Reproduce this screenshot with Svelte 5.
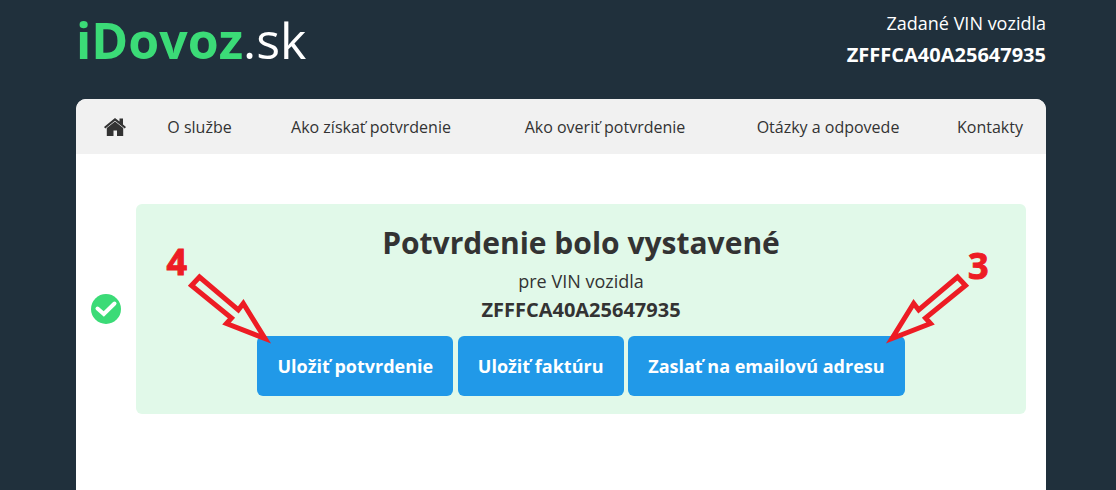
<script>
	const vin = 'ZFFFCA40A25647935';

	const links = [
		{ label: 'O službe', href: '#o-sluzbe' },
		{ label: 'Ako získať potvrdenie', href: '#ako-ziskat' },
		{ label: 'Ako overiť potvrdenie', href: '#ako-overit' },
		{ label: 'Otázky a odpovede', href: '#otazky' },
		{ label: 'Kontakty', href: '#kontakty' }
	];
</script>

<div class="page">
	<header>
		<a class="logo" href="#domov"><strong>iDovoz</strong>.sk</a>
		<div class="entered">
			<span>Zadané VIN vozidla</span>
			<strong class="vin">{vin}</strong>
		</div>
	</header>

	<div class="panel">
		<nav>
			<a class="home" href="#domov" aria-label="Domov">
				<svg viewBox="0 0 22 18">
					<path d="M11 0 15.500 3.600V.5h3.500v6L22 9 20.700 10.500 11 2.700 1.300 10.500 0 9Z" />
					<path d="M11 3.500 19.200 10.100V18H13v-5.500H9.500V18H2.800v-7.900Z" />
				</svg>
			</a>
			{#each links as link}
				<a href={link.href}>{link.label}</a>
			{/each}
		</nav>

		<main>
			<svg class="check" viewBox="0 0 30 30">
				<circle cx="15" cy="15" r="15" />
				<path d="M6.500 14.500 12.800 20 23.500 9.500" />
			</svg>

			<section class="success">
				<h1>Potvrdenie bolo vystavené</h1>
				<p>pre VIN vozidla</p>
				<strong class="vin">{vin}</strong>

				<div class="actions">
					<button type="button">Uložiť potvrdenie</button>
					<button type="button">Uložiť faktúru</button>
					<button type="button">Zaslať na emailovú adresu</button>

					<div class="mark mark-save">
						<span>4</span>
						<svg viewBox="0 0 88 76">
							<path d="M5.500 15.500 13.500 7 52.300 40 57.300 33.500 79 68.500 40.500 53.500 45.500 48Z" />
						</svg>
					</div>
					<div class="mark mark-send">
						<span>3</span>
						<svg viewBox="0 0 88 76">
							<path d="M82.500 15.500 74.500 7 35.700 40 30.700 33.500 9 68.500 47.500 53.500 42.500 48Z" />
						</svg>
					</div>
				</div>
			</section>
		</main>
	</div>
</div>

<style>
	:global(body) {
		margin: 0;
		background: #20303c;
	}

	.page {
		display: flex;
		flex-direction: column;
		box-sizing: border-box;
		min-height: 100vh;
		padding: 0 70px 0 76px;
		color: #333;
		font-family: 'Open Sans', 'Noto Sans', sans-serif;
		font-size: 18px;
	}

	a {
		color: inherit;
		text-decoration: none;
	}

	header {
		display: flex;
		justify-content: space-between;
		padding: 7px 0 26px;
		color: #fff;
	}

	.logo {
		font-size: 50px;
		line-height: 66px;
	}

	.logo strong {
		color: #3bdb77;
	}

	.entered {
		display: flex;
		flex-direction: column;
		text-align: right;
		line-height: 32px;
	}

	.vin {
		font-size: 20px;
	}

	.panel {
		flex: 1;
		overflow: hidden;
		border-radius: 10px 10px 0 0;
		background: #fff;
	}

	nav {
		display: grid;
		grid-template-columns: 78fr 91fr 252fr 216fr 230fr 94fr;
		align-items: center;
		height: 55px;
		padding-right: 9px;
		background: #f1f1f1;
		font-size: 16px;
		line-height: 56px;
		text-align: center;
		white-space: nowrap;
	}

	.home {
		display: flex;
		justify-content: center;
	}

	.home svg {
		width: 22px;
		height: 18px;
		fill: #333;
	}

	main {
		display: flex;
		align-items: center;
		gap: 15px;
		padding: 50px 20px 50px 15px;
	}

	.check {
		flex: none;
		width: 30px;
		height: 30px;
		fill: #3bdb77;
	}

	.check path {
		fill: none;
		stroke: #fff;
		stroke-width: 4;
		stroke-linecap: round;
	}

	.success {
		flex: 1;
		padding: 18px 20px;
		border-radius: 6px;
		background: #e1f9e9;
		text-align: center;
	}

	h1 {
		margin: 0;
		font-size: 30px;
		line-height: 42px;
	}

	p {
		margin: 0;
		line-height: 34px;
	}

	.success .vin {
		display: block;
		line-height: 24px;
	}

	.actions {
		position: relative;
		width: fit-content;
		margin: 14px auto 0;
	}

	button {
		height: 60px;
		padding: 0 20px;
		border: 0;
		border-radius: 6px;
		background: #2199e8;
		color: #fff;
		font: inherit;
		font-weight: 700;
		vertical-align: top;
		cursor: pointer;
	}

	/* numbered arrows pointing at the outer buttons */
	.mark {
		position: absolute;
		top: -66px;
		width: 88px;
		height: 76px;
		color: #ed1c24;
		pointer-events: none;
	}

	.mark-save {
		left: -71px;
	}

	.mark-send {
		right: -66px;
	}

	.mark span {
		position: absolute;
		font-size: 36px;
		font-weight: 700;
		line-height: 36px;
		-webkit-text-stroke: 1px currentColor;
	}

	.mark-save span {
		top: -26px;
		left: -20px;
	}

	.mark-send span {
		top: -22px;
		right: -18px;
	}

	.mark svg {
		display: block;
		width: 88px;
		height: 76px;
		fill: none;
		stroke: currentColor;
		stroke-width: 5;
		stroke-miterlimit: 10;
	}
</style>
